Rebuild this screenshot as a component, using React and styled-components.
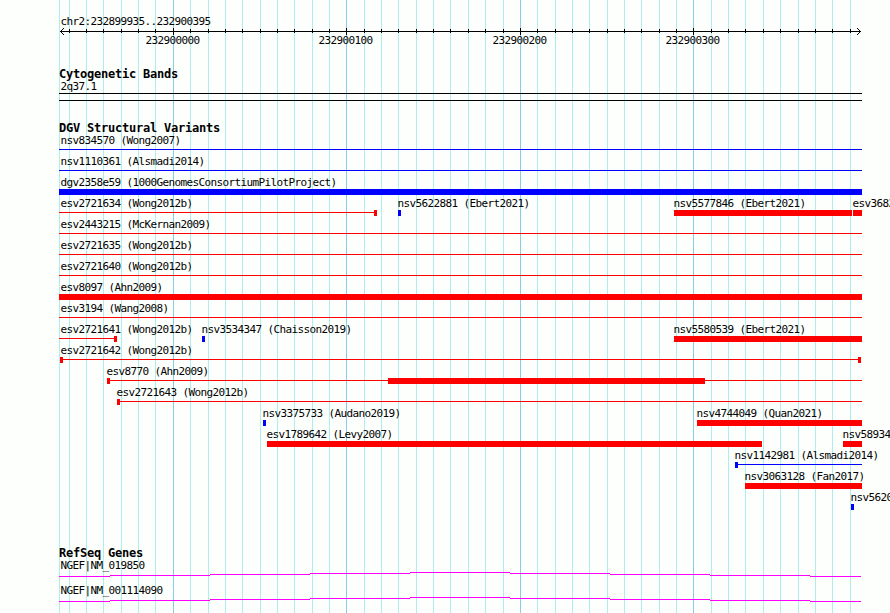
import styled, { createGlobalStyle } from "styled-components";

const START = 232899935;
const END = 232900395;
const LEFT = 60;
const SCALE = 800 / (END - START + 1);
const RED = "#ff0000";
const BLUE = "#0000ff";

const toX = (pos) => Math.round(LEFT + (pos - START) * SCALE);

const ticks = [];
for (let pos = 232899940; pos < END; pos += 10) {
  ticks.push({ pos, x: toX(pos), major: pos % 100 === 0 });
}

// bars are [from, to] for thick parts, line is the thin connector
const variants = [
  [{ name: "nsv834570 (Wong2007)", x: 61, color: BLUE, line: [59, 862] }],
  [{ name: "nsv1110361 (Alsmadi2014)", x: 61, color: BLUE, line: [59, 862] }],
  [{ name: "dgv2358e59 (1000GenomesConsortiumPilotProject)", x: 61, color: BLUE, bars: [[59, 862]] }],
  [
    { name: "esv2721634 (Wong2012b)", x: 61, color: RED, line: [59, 377], bars: [[374, 377]] },
    { name: "nsv5622881 (Ebert2021)", x: 398, color: BLUE, bars: [[398, 401]] },
    { name: "nsv5577846 (Ebert2021)", x: 674, color: RED, bars: [[674, 852]] },
    { name: "esv3682", x: 853, color: RED, bars: [[853, 862]] },
  ],
  [{ name: "esv2443215 (McKernan2009)", x: 61, color: RED, line: [59, 862] }],
  [{ name: "esv2721635 (Wong2012b)", x: 61, color: RED, line: [59, 862] }],
  [{ name: "esv2721640 (Wong2012b)", x: 61, color: RED, line: [59, 862] }],
  [{ name: "esv8097 (Ahn2009)", x: 61, color: RED, bars: [[59, 862]] }],
  [{ name: "esv3194 (Wang2008)", x: 61, color: RED, line: [59, 862] }],
  [
    { name: "esv2721641 (Wong2012b)", x: 61, color: RED, line: [59, 117], bars: [[114, 117]] },
    { name: "nsv3534347 (Chaisson2019)", x: 202, color: BLUE, bars: [[202, 205]] },
    { name: "nsv5580539 (Ebert2021)", x: 674, color: RED, bars: [[674, 862]] },
  ],
  [{ name: "esv2721642 (Wong2012b)", x: 61, color: RED, line: [60, 861], bars: [[60, 63], [858, 861]] }],
  [{ name: "esv8770 (Ahn2009)", x: 107, color: RED, line: [107, 862], bars: [[107, 110], [388, 705]] }],
  [{ name: "esv2721643 (Wong2012b)", x: 117, color: RED, line: [117, 862], bars: [[117, 120]] }],
  [
    { name: "nsv3375733 (Audano2019)", x: 263, color: BLUE, bars: [[263, 266]] },
    { name: "nsv4744049 (Quan2021)", x: 697, color: RED, bars: [[697, 862]] },
  ],
  [
    { name: "esv1789642 (Levy2007)", x: 267, color: RED, bars: [[267, 762]] },
    { name: "nsv58934", x: 843, color: RED, bars: [[843, 862]] },
  ],
  [{ name: "nsv1142981 (Alsmadi2014)", x: 735, color: BLUE, line: [735, 862], bars: [[735, 738]] }],
  [{ name: "nsv3063128 (Fan2017)", x: 745, color: RED, bars: [[745, 862]] }],
  [{ name: "nsv5620", x: 851, color: BLUE, bars: [[851, 854]] }],
];

const genes = ["NGEF|NM_019850", "NGEF|NM_001114090"];

const intron = [
  [59, 110, 4],
  [110, 210, 3],
  [210, 310, 2],
  [310, 410, 1],
  [410, 510, 0],
  [510, 610, 1],
  [610, 710, 2],
  [710, 810, 3],
  [810, 861, 4],
];

const Grid = () => (
  <GridLayer width="890" height="613" shapeRendering="crispEdges">
    <rect x="59" y="0" width="1" height="613" fill="#afeeee" />
    {ticks.map((t) => (
      <rect key={t.pos} x={t.x} y="0" width="1" height="613" fill={t.major ? "#87ceeb" : "#afeeee"} />
    ))}
  </GridLayer>
);

const Ruler = () => (
  <RulerBlock>
    <Label>chr2:232899935..232900395</Label>
    <Drawing width="890" height="7" shapeRendering="crispEdges">
      <rect x="60" y="3" width="801" height="1" />
      {ticks.map((t) => (
        <rect key={t.pos} x={t.x} y={t.major ? 0 : 1} width="1" height={t.major ? 7 : 4} />
      ))}
      {[1, 2, 3].map((d) => (
        <g key={d}>
          <rect x={60 + d} y={3 - d} width="1" height="1" />
          <rect x={60 + d} y={3 + d} width="1" height="1" />
          <rect x={860 - d} y={3 - d} width="1" height="1" />
          <rect x={860 - d} y={3 + d} width="1" height="1" />
        </g>
      ))}
    </Drawing>
    <TickLabels>
      {ticks
        .filter((t) => t.major)
        .map((t) => (
          <PlacedLabel key={t.pos} style={{ left: t.x - 27.5 }}>
            {t.pos}
          </PlacedLabel>
        ))}
    </TickLabels>
  </RulerBlock>
);

const VariantRow = ({ features }) => (
  <Row>
    <RowLabels>
      {features.map((f) => (
        <PlacedLabel key={f.name} style={{ left: f.x - 0.5 }}>
          {f.name}
        </PlacedLabel>
      ))}
    </RowLabels>
    <Drawing width="890" height="6" shapeRendering="crispEdges">
      {features.map((f) => (
        <g key={f.name} fill={f.color}>
          {f.line && <rect x={f.line[0]} y="2" width={f.line[1] - f.line[0]} height="1" />}
          {(f.bars || []).map(([from, to]) => (
            <rect key={from} x={from} y="0" width={to - from} height="6" />
          ))}
        </g>
      ))}
    </Drawing>
  </Row>
);

const App = () => {
  return (
    <>
      <GlobalStyle />
      <Browser>
        <Grid />
        <Ruler />
        <Track $space={21}>
          <Title>Cytogenetic Bands</Title>
          <Label>2q37.1</Label>
          <Band />
        </Track>
        <Track $space={21}>
          <Title>DGV Structural Variants</Title>
          {variants.map((features) => (
            <VariantRow key={features[0].name} features={features} />
          ))}
        </Track>
        <Track $space={35}>
          <Title>RefSeq Genes</Title>
          {genes.map((gene) => (
            <GeneRow key={gene}>
              <Label>{gene}</Label>
              <Drawing width="890" height="5" shapeRendering="crispEdges">
                {intron.map(([from, to, y]) => (
                  <rect key={from} x={from} y={y} width={to - from} height="1" fill="#ff00ff" />
                ))}
              </Drawing>
            </GeneRow>
          ))}
        </Track>
      </Browser>
    </>
  );
};

export default App;

const GlobalStyle = createGlobalStyle`
  body {
    margin: 0;
    background: #fdfffc;
    overflow: hidden;
  }
`;
const Browser = styled.div`
  position: relative;
  width: 890px;
  height: 613px;
  padding-top: 15px;
  box-sizing: border-box;
  overflow: hidden;
  color: #000;
  font-family: "DejaVu Sans Mono", "Liberation Mono", monospace;
`;
const GridLayer = styled.svg`
  position: absolute;
  top: 0;
  left: 0;
`;
const Drawing = styled.svg`
  display: block;
  position: relative;
`;
const Label = styled.div`
  position: relative;
  height: 13px;
  margin-left: 60.5px;
  font-size: 11px;
  line-height: 13px;
  letter-spacing: -0.622px;
  white-space: pre;
`;
const PlacedLabel = styled(Label)`
  position: absolute;
  top: 0;
  margin-left: 0;
`;
const Title = styled.div`
  position: relative;
  height: 12px;
  margin-left: 59px;
  font-size: 12px;
  font-weight: bold;
  line-height: 13px;
  letter-spacing: -0.224px;
  white-space: pre;
`;
const RulerBlock = styled.div`
  height: 32px;
`;
const TickLabels = styled.div`
  position: relative;
  height: 13px;
  margin-top: -1px;
`;
const Track = styled.div`
  padding-top: ${(props) => props.$space}px;
`;
const Band = styled.div`
  position: relative;
  width: 803px;
  height: 8px;
  box-sizing: border-box;
  margin-left: 59px;
  border: solid #000;
  border-width: 1px 0;
`;
const Row = styled.div`
  height: 21px;
`;
const RowLabels = styled.div`
  position: relative;
  height: 13px;
`;
const GeneRow = styled.div`
  height: 25px;
`;
